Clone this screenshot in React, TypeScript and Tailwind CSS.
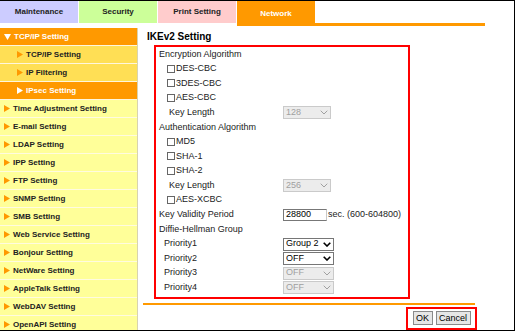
import React from 'react';

const font = { fontFamily: '"Liberation Sans", Arial, sans-serif' };

const Tri: React.FC<{ color: string }> = ({ color }) => (
  <svg width="6" height="7" viewBox="0 0 6 7" className="flex-none">
    <polygon points="0,0 6,3.5 0,7" fill={color} />
  </svg>
);

const Down: React.FC = () => (
  <svg width="7" height="6" viewBox="0 0 7 6" className="flex-none">
    <polygon points="0,0 7,0 3.5,6" fill="#fff" />
  </svg>
);

const Select: React.FC<{ value: string; disabled?: boolean; w: string }> = ({ value, disabled, w }) => (
  <div
    className={`${w} h-[13px] flex items-center justify-between pl-[2px] pr-[2px] border text-[9px] ${
      disabled ? 'bg-[#ececec] border-[#cacaca] text-[#a0a0a0]' : 'bg-white border-[#767676] text-black'
    }`}
  >
    <span className="whitespace-nowrap">{value}</span>
    <svg width="8" height="5" viewBox="0 0 8 5" className="flex-none">
      <polyline
        points="0.7,0.7 4,4 7.3,0.7"
        fill="none"
        stroke={disabled ? '#a0a0a0' : '#000'}
        strokeWidth={disabled ? 1 : 1.6}
      />
    </svg>
  </div>
);

const Check: React.FC<{ label: string }> = ({ label }) => (
  <div className="flex items-center pl-[11px]">
    <div className="w-[8px] h-[8px] border border-[#666] bg-white mr-[1px]" />
    <span>{label}</span>
  </div>
);

const Row: React.FC<{ children: React.ReactNode }> = ({ children }) => (
  <div className="h-[14.6px] flex items-center">{children}</div>
);

const LabelRow: React.FC<{ label: string; pad: string; children: React.ReactNode }> = ({ label, pad, children }) => (
  <Row>
    <div className={`w-[127px] flex-none ${pad}`}>{label}</div>
    {children}
  </Row>
);

const navItems = [
  'Time Adjustment Setting',
  'E-mail Setting',
  'LDAP Setting',
  'IPP Setting',
  'FTP Setting',
  'SNMP Setting',
  'SMB Setting',
  'Web Service Setting',
  'Bonjour Setting',
  'NetWare Setting',
  'AppleTalk Setting',
  'WebDAV Setting',
  'OpenAPI Setting',
];

export default function App() {
  return (
    <div style={font} className="w-[515px] h-[331px] bg-white border-t border-r border-b border-black flex flex-col overflow-hidden">
      {/* Tabs */}
      <div className="h-[27px] flex items-start gap-[1px] flex-none">
        <div className="w-[78px] h-[22px] bg-[#ccccff] flex items-center justify-center text-[8px] font-bold text-[#222]">Maintenance</div>
        <div className="w-[78px] h-[22px] bg-[#ccff99] flex items-center justify-center text-[8px] font-bold text-[#222]">Security</div>
        <div className="w-[78px] h-[22px] bg-[#ffcccc] flex items-center justify-center text-[8px] font-bold text-[#222]">Print Setting</div>
        <div className="w-[78px] h-[25px] bg-[#ff9900] flex items-start pt-[7px] justify-center text-[8px] font-bold text-white">Network</div>
        <div className="w-[170px] h-[25px] border-b-[3px] border-[#ff9900] -ml-[1px]" />
      </div>

      <div className="flex flex-1 min-h-0">
        {/* Sidebar */}
        <div className="w-[138px] flex-none flex flex-col text-[8px] font-bold border-r border-[#d8d3b0]">
          <div className="h-[18px] flex-none flex items-center gap-[3px] pl-[4px] bg-[#ff9900] text-white border-b border-[#fff6dd]">
            <Down />
            <span>TCP/IP Setting</span>
          </div>
          <div className="h-[18px] flex-none flex items-center gap-[3px] pl-[17px] bg-[#ffdf55] text-[#222] border-b border-[#fff6dd]">
            <Tri color="#ff9900" />
            <span>TCP/IP Setting</span>
          </div>
          <div className="h-[18px] flex-none flex items-center gap-[3px] pl-[17px] bg-[#ffdf55] text-[#222] border-b border-[#fff6dd]">
            <Tri color="#ff9900" />
            <span>IP Filtering</span>
          </div>
          <div className="h-[18px] flex-none flex items-center gap-[3px] pl-[17px] bg-[#ff9900] text-white border-b border-[#fff6dd]">
            <Tri color="#fff" />
            <span>IPsec Setting</span>
          </div>
          {navItems.map((n) => (
            <div key={n} className="h-[18px] flex-none flex items-center gap-[3px] pl-[4px] bg-[#ffff99] text-[#222] border-b border-[#fffbe0]">
              <Tri color="#ff9900" />
              <span>{n}</span>
            </div>
          ))}
        </div>

        {/* Main */}
        <div className="flex-1 flex flex-col text-[9px] text-[#222]">
          <div className="h-[17px] flex items-center pl-[9px] text-[10px] font-bold text-black">IKEv2 Setting</div>

          <div className="ml-[16px] w-[256px] h-[254px] border-2 border-[#ff0000] flex flex-col">
            <Row><span className="pl-[3px]">Encryption Algorithm</span></Row>
            <Row><Check label="DES-CBC" /></Row>
            <Row><Check label="3DES-CBC" /></Row>
            <Row><Check label="AES-CBC" /></Row>
            <LabelRow label="Key Length" pad="pl-[13px]">
              <Select value="128" disabled w="w-[48px]" />
            </LabelRow>
            <Row><span className="pl-[3px]">Authentication Algorithm</span></Row>
            <Row><Check label="MD5" /></Row>
            <Row><Check label="SHA-1" /></Row>
            <Row><Check label="SHA-2" /></Row>
            <LabelRow label="Key Length" pad="pl-[13px]">
              <Select value="256" disabled w="w-[48px]" />
            </LabelRow>
            <Row><Check label="AES-XCBC" /></Row>
            <LabelRow label="Key Validity Period" pad="pl-[3px]">
              <div className="w-[44px] h-[12px] flex items-center pl-[2px] bg-white border border-[#777] border-r-[#c8c8c8] text-black">28800</div>
              <span className="ml-[1px]">sec. (600-604800)</span>
            </LabelRow>
            <Row><span className="pl-[3px]">Diffie-Hellman Group</span></Row>
            <LabelRow label="Priority1" pad="pl-[8px]">
              <Select value="Group 2" w="w-[51px]" />
            </LabelRow>
            <LabelRow label="Priority2" pad="pl-[8px]">
              <Select value="OFF" w="w-[51px]" />
            </LabelRow>
            <LabelRow label="Priority3" pad="pl-[8px]">
              <Select value="OFF" disabled w="w-[51px]" />
            </LabelRow>
            <LabelRow label="Priority4" pad="pl-[8px]">
              <Select value="OFF" disabled w="w-[51px]" />
            </LabelRow>
          </div>

          <div className="mt-[4px] ml-[5px] w-[332px] h-[2px] bg-[#ff9900]" />

          <div className="mt-[2px] ml-[268px] w-[71px] flex-1 border-2 border-[#ff0000] flex items-start pt-[2px] justify-center gap-[3px]">
            <button className="w-[20px] h-[14px] bg-[#e6e6e6] border border-[#8a8a8a] text-[9px] text-black leading-none">OK</button>
            <button className="w-[35px] h-[14px] bg-[#e6e6e6] border border-[#8a8a8a] text-[9px] text-black leading-none">Cancel</button>
          </div>
        </div>
      </div>
    </div>
  );
}
